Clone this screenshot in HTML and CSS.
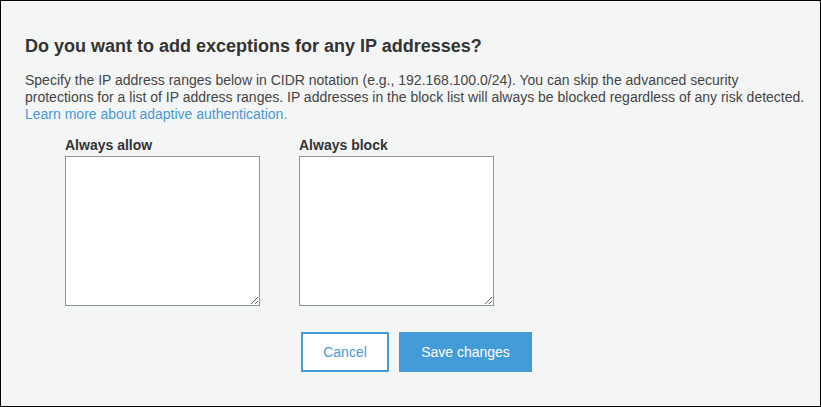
FILE: index.html
```html
<!DOCTYPE html>
<html>
<head>
<meta charset="utf-8">
<link rel="stylesheet" href="styles.css">
</head>
<body>
<div class="panel">
  <h2 class="title">Do you want to add exceptions for any IP addresses?</h2>
  <p class="desc">Specify the IP address ranges below in CIDR notation (e.g., 192.168.100.0/24). You can skip the advanced security protections for a list of IP address ranges. IP addresses in the block list will always be blocked regardless of any risk detected. <a class="link" href="#">Learn more about adaptive authentication.</a></p>
  <div class="fields">
    <div class="field">
      <label class="label">Always allow</label>
      <textarea class="box"></textarea>
    </div>
    <div class="field">
      <label class="label">Always block</label>
      <textarea class="box"></textarea>
    </div>
  </div>
  <div class="actions">
    <button class="btn btn-cancel">Cancel</button>
    <button class="btn btn-save">Save changes</button>
  </div>
</div>
</body>
</html>
```
FILE: styles.css
```css
html, body {
  margin: 0;
  padding: 0;
}
body {
  font-family: "Liberation Sans", Arial, sans-serif;
  color: #333;
}
.panel {
  box-sizing: border-box;
  width: 821px;
  height: 407px;
  border: 1px solid #000;
  background: #f4f6f6;
  padding: 34px 14px 0 24px;
}
.title {
  margin: 0;
  font-size: 18px;
  line-height: 22px;
  font-weight: bold;
  color: #333;
}
.desc {
  margin: 15px 0 0;
  font-size: 14px;
  line-height: 17px;
  color: #444;
}
.link {
  color: #4a97d6;
  text-decoration: none;
}
.fields {
  display: flex;
  gap: 39px;
  margin: 14px 0 0 40px;
}
.field {
  display: flex;
  flex-direction: column;
  gap: 2px;
}
.label {
  font-size: 14px;
  line-height: 17px;
  font-weight: bold;
  color: #333;
}
.box {
  box-sizing: border-box;
  width: 195px;
  height: 150px;
  margin: 0;
  border: 1px solid #8d9596;
  background: #fff;
  resize: both;
  font-family: "Liberation Sans", Arial, sans-serif;
}
.actions {
  display: flex;
  gap: 10px;
  margin: 26px 0 0 276px;
}
.btn {
  box-sizing: border-box;
  height: 40px;
  font-family: "Liberation Sans", Arial, sans-serif;
  font-size: 14px;
  border-radius: 0;
  cursor: pointer;
}
.btn-cancel {
  width: 88px;
  background: #fff;
  border: 2px solid #449cd8;
  color: #449cd8;
}
.btn-save {
  width: 133px;
  background: #439bd7;
  border: none;
  color: #fff;
}
```
